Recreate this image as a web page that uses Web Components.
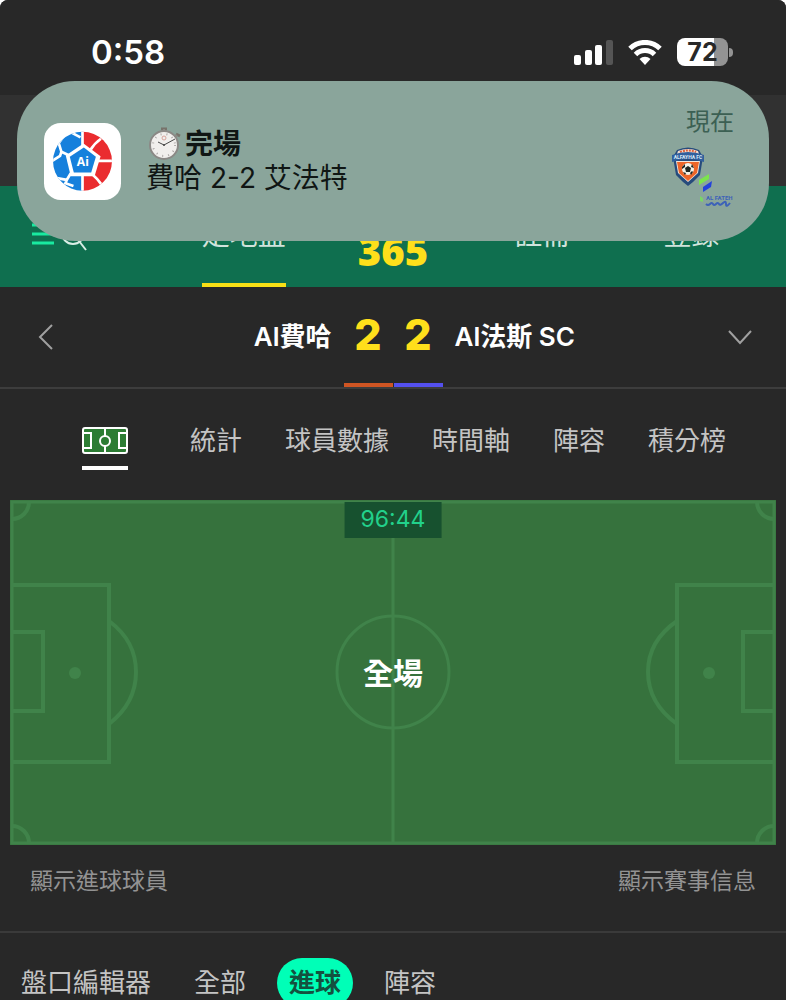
<!DOCTYPE html>
<html lang="zh-Hant">
<head>
<meta charset="utf-8">
<meta name="viewport" content="width=device-width, initial-scale=1">
<title>Al費哈 2-2 Al法斯 SC</title>
<style>
    html {
        background: #fff;
        scrollbar-width: none;
    }
    body {
        margin: 0;
        color: #c4c4c4;
        font-family: Inter, "Noto Sans CJK TC", sans-serif;
        font-size: 26px;
        line-height: 34px;
    }
</style>
</head>
<body>
<live-app>
    <status-bar slot="status">0:58<span slot="battery">72</span></status-bar>
    <push-banner slot="banner">
        <span slot="title">完場</span>
        <span slot="message">費哈 2-2 艾法特</span>
        <span slot="time">現在</span>
    </push-banner>
    <site-header>
        <span slot="live">走地盤</span>
        <span slot="brand">365</span>
        <span slot="join">註冊</span>
        <span slot="login">登錄</span>
    </site-header>
    <score-strip home="2" away="2">
        <span slot="home">Al費哈</span>
        <span slot="away">Al法斯 SC</span>
    </score-strip>
    <match-tabs items="統計,球員數據,時間軸,陣容,積分榜"></match-tabs>
    <football-pitch>
        <span slot="clock">96:44</span>
        全場
    </football-pitch>
    <info-links>
        <span slot="scorers">顯示進球球員</span>
        <span slot="details">顯示賽事信息</span>
    </info-links>
    <market-filter items="盤口編輯器,全部,進球,陣容" active="進球"></market-filter>
</live-app>

<script>
const reset = `
    :host,
    * {
        box-sizing: border-box;
    }
    button {
        margin: 0;
        padding: 0;
        border: none;
        background: none;
        color: inherit;
        font: inherit;
        cursor: pointer;
    }
    a {
        color: inherit;
        text-decoration: none;
    }
    svg {
        display: block;
        flex: none;
    }
`;

class LiveApp extends HTMLElement {
    constructor() {
        super();
        this.attachShadow({ mode: 'open' });
        this.shadowRoot.innerHTML = `
            <style>
                :host {
                    display: block;
                    position: relative;
                    min-height: 100vh;
                    border-radius: 8px 8px 0 0;
                    background: #282828;
                    overflow: hidden;
                }
                .strip {
                    height: 91px;
                    background: #313131;
                }
                /* the notification floats over the page */
                ::slotted(push-banner) {
                    position: absolute;
                    top: 81px;
                    left: 17px;
                    right: 17px;
                    z-index: 10;
                }
            </style>
            <slot name="status"></slot>
            <slot name="banner"></slot>
            <div class="strip"></div>
            <slot></slot>
        `;
    }
}

class StatusBar extends HTMLElement {
    constructor() {
        super();
        this.attachShadow({ mode: 'open' });
        this.shadowRoot.innerHTML = `
            <style>
                ${reset}
                :host {
                    display: flex;
                    justify-content: space-between;
                    align-items: center;
                    height: 95px;
                    padding: 9px 53px 0 91px;
                    background: #282828;
                    color: #fff;
                    font-size: 33px;
                    font-weight: 600;
                    line-height: 40px;
                }
                .icons {
                    display: flex;
                    align-items: center;
                    gap: 15px;
                }
                .battery {
                    display: flex;
                    align-items: center;
                    gap: 1px;
                }
                .cell {
                    width: 51px;
                    height: 28px;
                    border-radius: 8px;
                    background: linear-gradient(90deg, #fff 72%, #939393 72%);
                    color: #282828;
                    font-size: 25px;
                    font-weight: 700;
                    line-height: 28px;
                    text-align: center;
                }
                .tip {
                    width: 4px;
                    height: 9px;
                    border-radius: 0 4px 4px 0;
                    background: #939393;
                }
            </style>
            <time><slot></slot></time>
            <div class="icons">
                <svg width="39" height="25" viewBox="0 0 39 25" fill="#fff">
                    <rect x="0" y="15" width="7" height="10" rx="2"/>
                    <rect x="11" y="10" width="7" height="15" rx="2"/>
                    <rect x="21" y="5" width="7" height="20" rx="2"/>
                    <rect x="32" y="0" width="7" height="25" rx="2" fill="#555"/>
                </svg>
                <svg width="34" height="25" viewBox="0 0 34 25" fill="none" stroke="#fff" stroke-width="5">
                    <path d="M2 8.500a21.500 21.500 0 0 1 30 0"/>
                    <path d="M7.500 14.500a13.500 13.500 0 0 1 19 0"/>
                    <path d="M11.500 19a8 8 0 0 1 11 0L17 25z" fill="#fff" stroke="none"/>
                </svg>
                <div class="battery">
                    <div class="cell"><slot name="battery"></slot></div>
                    <div class="tip"></div>
                </div>
            </div>
        `;
    }
}

class PushBanner extends HTMLElement {
    constructor() {
        super();
        this.attachShadow({ mode: 'open' });
        this.shadowRoot.innerHTML = `
            <style>
                ${reset}
                :host {
                    display: flex;
                    align-items: center;
                    gap: 25px;
                    height: 160px;
                    padding: 0 35px 0 27px;
                    border-radius: 58px;
                    background: #8aa59b;
                    color: #101614;
                }
                .text {
                    flex: 1;
                    font-size: 28px;
                }
                .title {
                    display: flex;
                    align-items: center;
                    gap: 4px;
                    padding-left: 3px;
                    font-weight: 700;
                }
                .meta {
                    display: flex;
                    flex-direction: column;
                    align-items: flex-end;
                    align-self: flex-start;
                    gap: 9px;
                    padding-top: 26px;
                    color: #3c6053;
                    font-size: 24px;
                    line-height: 30px;
                }
            </style>
            <svg width="77" height="77" viewBox="0 0 230 230">
                <defs><clipPath id="ball"><circle cx="115" cy="114" r="88"/></clipPath></defs>
                <rect width="230" height="230" rx="50" fill="#fff"/>
                <g clip-path="url(#ball)">
                    <path d="M20 20h95v190H20z" fill="#1680dc"/>
                    <path d="M115 20h100v190h-100z" fill="#ea2c2f"/>
                    <path d="M118 61l51 38-18 60H80L65 97z" fill="#fff"/>
                    <g fill="none" stroke="#fff" stroke-width="8">
                        <path d="M115 20v50M115 150v60M137 83q13-22 33-36M155 113h55M145 154q14 12 27 30"/>
                        <path d="M82 100L52 86 44 60 60 38M52 86l-4 12-25 16M75 25l34 18M80 150l-12 20-44-8M68 170l-4 10 24 8"/>
                    </g>
                </g>
                <path d="M119 73l36 28-14 47H89L77 101z" fill="#1680dc"/>
                <text x="116" y="128" fill="#fff" font-family="Open Sans, sans-serif" font-size="36" font-weight="700" text-anchor="middle">Ai</text>
            </svg>
            <div class="text">
                <div class="title">
                    <svg width="32" height="34" viewBox="0 0 32 34">
                        <path d="M12 2h6M27 7l4 2" stroke="#77736b" stroke-width="3"/>
                        <path d="M15 2v3M26 10l2-2" stroke="#8b8983" stroke-width="2"/>
                        <circle cx="15" cy="18" r="14" fill="#f1efed" stroke="#8b8986" stroke-width="2"/>
                        <circle cx="15" cy="18" r="11" fill="none" stroke="#aaa6a4" stroke-width="2" stroke-dasharray="1 5"/>
                        <circle cx="15" cy="11" r="2" fill="none" stroke="#d7a49c"/>
                        <path d="M9 15l6 3 11-6" fill="none" stroke="#484848"/>
                        <circle cx="15" cy="18" r="1" fill="#444"/>
                    </svg>
                    <slot name="title"></slot>
                </div>
                <slot name="message"></slot>
            </div>
            <div class="meta">
                <slot name="time"></slot>
                <svg width="64" height="62" viewBox="0 0 64 62">
                    <path d="M7 4q11-5 22 0l4 7-3 18-7 7-5 4-5-4-7-7L3 11z" fill="#274b7c"/>
                    <path d="M8 5q10-4 20 0l2 6H6z" fill="#f5ded0"/>
                    <path d="M10 6q8-3 16 0" fill="none" stroke="#df633d" stroke-width="2" stroke-dasharray="2 1"/>
                    <path d="M6 15h24l-2 12-10 9-10-9z" fill="#f4e6dc"/>
                    <path d="M7 16h22l-2 11-9 8-9-8z" fill="#ed6529"/>
                    <path d="M2 9q16-6 32 0v7q-16-6-32 0z" fill="#315f9d"/>
                    <text x="18" y="13" fill="#dce9f5" font-family="Roboto, sans-serif" font-size="5" font-weight="700" text-anchor="middle">ALFAYHA FC</text>
                    <circle cx="18" cy="23" r="6" fill="#f5f2e9"/>
                    <path d="M18 20l3 2-1 4h-4l-1-4zM12 21l3-3v3l-3 2zM22 18l2 4-3-1zM13 26l3 1-1 2zM22 25l1 1-2 3-1-2z" fill="#202522"/>
                    <path d="M29 34l10-6v5l-10 6z" fill="#7ce44d"/>
                    <path d="M33 41l9-6-1 6-8 5z" fill="#2442dc"/>
                    <path d="M30 50l3 2v4l-3-1z" fill="#7bd467"/>
                    <text x="36" y="54" fill="#3d62b8" font-family="Roboto, sans-serif" font-size="6" font-weight="700">AL FATEH</text>
                    <path d="M36 58q2 2 4 0t3 0 3 0 3 0 4-1 3 1 4-1" fill="none" stroke="#3d62b8" stroke-width="2"/>
                </svg>
            </div>
        `;
    }
}

class SiteHeader extends HTMLElement {
    constructor() {
        super();
        this.attachShadow({ mode: 'open' });
        this.shadowRoot.innerHTML = `
            <style>
                ${reset}
                :host {
                    display: block;
                    background: #0f6f4f;
                    color: #d0e3dc;
                    font-size: 28px;
                }
                nav {
                    display: grid;
                    grid-template-columns: 137fr repeat(4, 149fr);
                    justify-items: center;
                    height: 101px;
                    padding: 0 20px 0 32px;
                }
                .tools {
                    display: flex;
                    align-items: center;
                    justify-self: start;
                    gap: 6px;
                    padding-bottom: 3px;
                }
                a {
                    display: flex;
                    align-items: center;
                    padding-bottom: 4px;
                }
                .live {
                    padding-bottom: 0;
                    border-bottom: 4px solid #f7df16;
                }
                .brand {
                    padding: 29px 0 0;
                    color: #ffdf1b;
                    font-family: "Open Sans", sans-serif;
                    font-size: 40px;
                    font-weight: 800;
                }
            </style>
            <nav>
                <div class="tools">
                    <button aria-label="menu">
                        <svg width="22" height="24" viewBox="0 0 22 24" stroke="#19eaa0" stroke-width="3">
                            <path d="M0 2h22M0 11h22M0 20h22"/>
                        </svg>
                    </button>
                    <button aria-label="search">
                        <svg width="28" height="36" viewBox="0 0 28 36" fill="none" stroke="#d9eee6" stroke-width="2">
                            <circle cx="13" cy="16" r="11"/>
                            <path d="M19 24l7 9"/>
                        </svg>
                    </button>
                </div>
                <a class="live" href="#live"><slot name="live"></slot></a>
                <a class="brand" href="#home"><slot name="brand"></slot></a>
                <a href="#join"><slot name="join"></slot></a>
                <a href="#login"><slot name="login"></slot></a>
            </nav>
        `;
    }
}

class ScoreStrip extends HTMLElement {
    constructor() {
        super();
        this.attachShadow({ mode: 'open' });
        this.shadowRoot.innerHTML = `
            <style>
                ${reset}
                :host {
                    display: grid;
                    grid-template-columns: 1fr auto 1fr;
                    gap: 12px;
                    height: 102px;
                    padding: 0 33px;
                    border-bottom: 2px solid #3d3d3d;
                    color: #fff;
                    font-weight: 600;
                }
                .side {
                    display: flex;
                    justify-content: space-between;
                    align-items: center;
                }
                .scores {
                    display: flex;
                    gap: 1px;
                }
                .scores b {
                    width: 49px;
                    border-bottom: 4px solid #cf5523;
                    color: #ffdf1b;
                    font-size: 43px;
                    font-weight: 800;
                    line-height: 94px;
                    text-align: center;
                }
                .scores b + b {
                    border-color: #5450ee;
                }
            </style>
            <div class="side">
                <button aria-label="back">
                    <svg width="26" height="26" viewBox="0 0 26 26" fill="none" stroke="#a0a0a0" stroke-width="2">
                        <path d="M19 1L7 13l12 12"/>
                    </svg>
                </button>
                <slot name="home"></slot>
            </div>
            <div class="scores"><b></b><b></b></div>
            <div class="side">
                <slot name="away"></slot>
                <button aria-label="more matches">
                    <svg width="26" height="26" viewBox="0 0 26 26" fill="none" stroke="#a0a0a0" stroke-width="2">
                        <path d="M2 7l11 12L24 7"/>
                    </svg>
                </button>
            </div>
        `;
    }

    connectedCallback() {
        const scores = this.shadowRoot.querySelectorAll('b');
        scores[0].textContent = this.getAttribute('home');
        scores[1].textContent = this.getAttribute('away');
    }
}

class MatchTabs extends HTMLElement {
    constructor() {
        super();
        this.attachShadow({ mode: 'open' });
        this.shadowRoot.innerHTML = `
            <style>
                ${reset}
                :host {
                    display: flex;
                    align-items: flex-start;
                    gap: 62px;
                    height: 111px;
                    padding: 35px 60px 0 82px;
                }
                .list {
                    display: flex;
                    flex: 1;
                    justify-content: space-between;
                }
                .current {
                    padding: 3px 0 12px;
                    border-bottom: 4px solid #fff;
                }
            </style>
            <button class="current" aria-label="pitch">
                <svg width="46" height="27" viewBox="0 0 46 27" fill="none" stroke="#fff" stroke-width="2">
                    <rect x="1" y="1" width="44" height="25" rx="2" fill="#2c7c33"/>
                    <path d="M23 1v8M23 19v7M1 6h8v15H1M45 6h-8v15h8"/>
                    <circle cx="23" cy="14" r="5"/>
                </svg>
            </button>
            <div class="list"></div>
        `;
    }

    connectedCallback() {
        const list = this.shadowRoot.querySelector('.list');
        for (const item of this.getAttribute('items').split(',')) {
            const tab = document.createElement('button');
            tab.textContent = item;
            list.appendChild(tab);
        }
    }
}

class FootballPitch extends HTMLElement {
    constructor() {
        super();
        this.attachShadow({ mode: 'open' });
        this.shadowRoot.innerHTML = `
            <style>
                ${reset}
                :host {
                    display: grid;
                    place-items: center;
                    position: relative;
                    margin: 0 10px;
                }
                svg, .state {
                    grid-area: 1 / 1;
                }
                svg {
                    width: 100%;
                    height: auto;
                }
                .state {
                    color: #fff;
                    font-size: 30px;
                    font-weight: 600;
                }
                .clock {
                    position: absolute;
                    top: 2px;
                    left: 50%;
                    transform: translateX(-50%);
                    padding: 0 16px 2px;
                    background: #17512f;
                    color: #22d18b;
                    font-size: 23px;
                }
            </style>
            <svg viewBox="0 0 766 345" fill="none" stroke="#40834a" stroke-width="4">
                <rect width="766" height="345" fill="#36723d" stroke="none"/>
                <rect x="2" y="2" width="762" height="341" stroke-width="3"/>
                <path d="M383 2v341" stroke-width="3"/>
                <circle cx="383" cy="172" r="56" stroke-width="3"/>
                <path d="M2 85h97v177H2M2 132h31v79H2M99 121q27 20 27 51t-27 52"/>
                <path d="M764 85h-97v177h97M764 132h-31v79h31M667 121q-29 20-29 51t29 52"/>
                <path d="M19 2A17 17 0 0 1 2 19M2 326a17 17 0 0 1 17 17M747 2a17 17 0 0 0 17 17M764 326a17 17 0 0 0-17 17"/>
                <circle cx="65" cy="173" r="6" fill="#40834a" stroke="none"/>
                <circle cx="699" cy="173" r="6" fill="#40834a" stroke="none"/>
            </svg>
            <div class="clock"><slot name="clock"></slot></div>
            <div class="state"><slot></slot></div>
        `;
    }
}

class InfoLinks extends HTMLElement {
    constructor() {
        super();
        this.attachShadow({ mode: 'open' });
        this.shadowRoot.innerHTML = `
            <style>
                ${reset}
                :host {
                    display: flex;
                    justify-content: space-between;
                    padding: 19px 30px 33px;
                    border-bottom: 2px solid #3a3a3a;
                    color: #939393;
                    font-size: 23px;
                }
            </style>
            <a href="#scorers"><slot name="scorers"></slot></a>
            <a href="#details"><slot name="details"></slot></a>
        `;
    }
}

class MarketFilter extends HTMLElement {
    constructor() {
        super();
        this.attachShadow({ mode: 'open' });
        this.shadowRoot.innerHTML = `
            <style>
                ${reset}
                :host {
                    display: flex;
                    gap: 19px;
                    padding: 25px 9px 0;
                }
                button {
                    padding: 8px 12px;
                    border-radius: 25px;
                }
                .active {
                    background: #00ffb7;
                    color: #14513f;
                    font-weight: 600;
                }
            </style>
        `;
    }

    connectedCallback() {
        for (const item of this.getAttribute('items').split(',')) {
            const chip = document.createElement('button');
            chip.textContent = item;
            chip.classList.toggle('active', item === this.getAttribute('active'));
            this.shadowRoot.appendChild(chip);
        }
    }
}

customElements.define('live-app', LiveApp);
customElements.define('status-bar', StatusBar);
customElements.define('push-banner', PushBanner);
customElements.define('site-header', SiteHeader);
customElements.define('score-strip', ScoreStrip);
customElements.define('match-tabs', MatchTabs);
customElements.define('football-pitch', FootballPitch);
customElements.define('info-links', InfoLinks);
customElements.define('market-filter', MarketFilter);
</script>
</body>
</html>
